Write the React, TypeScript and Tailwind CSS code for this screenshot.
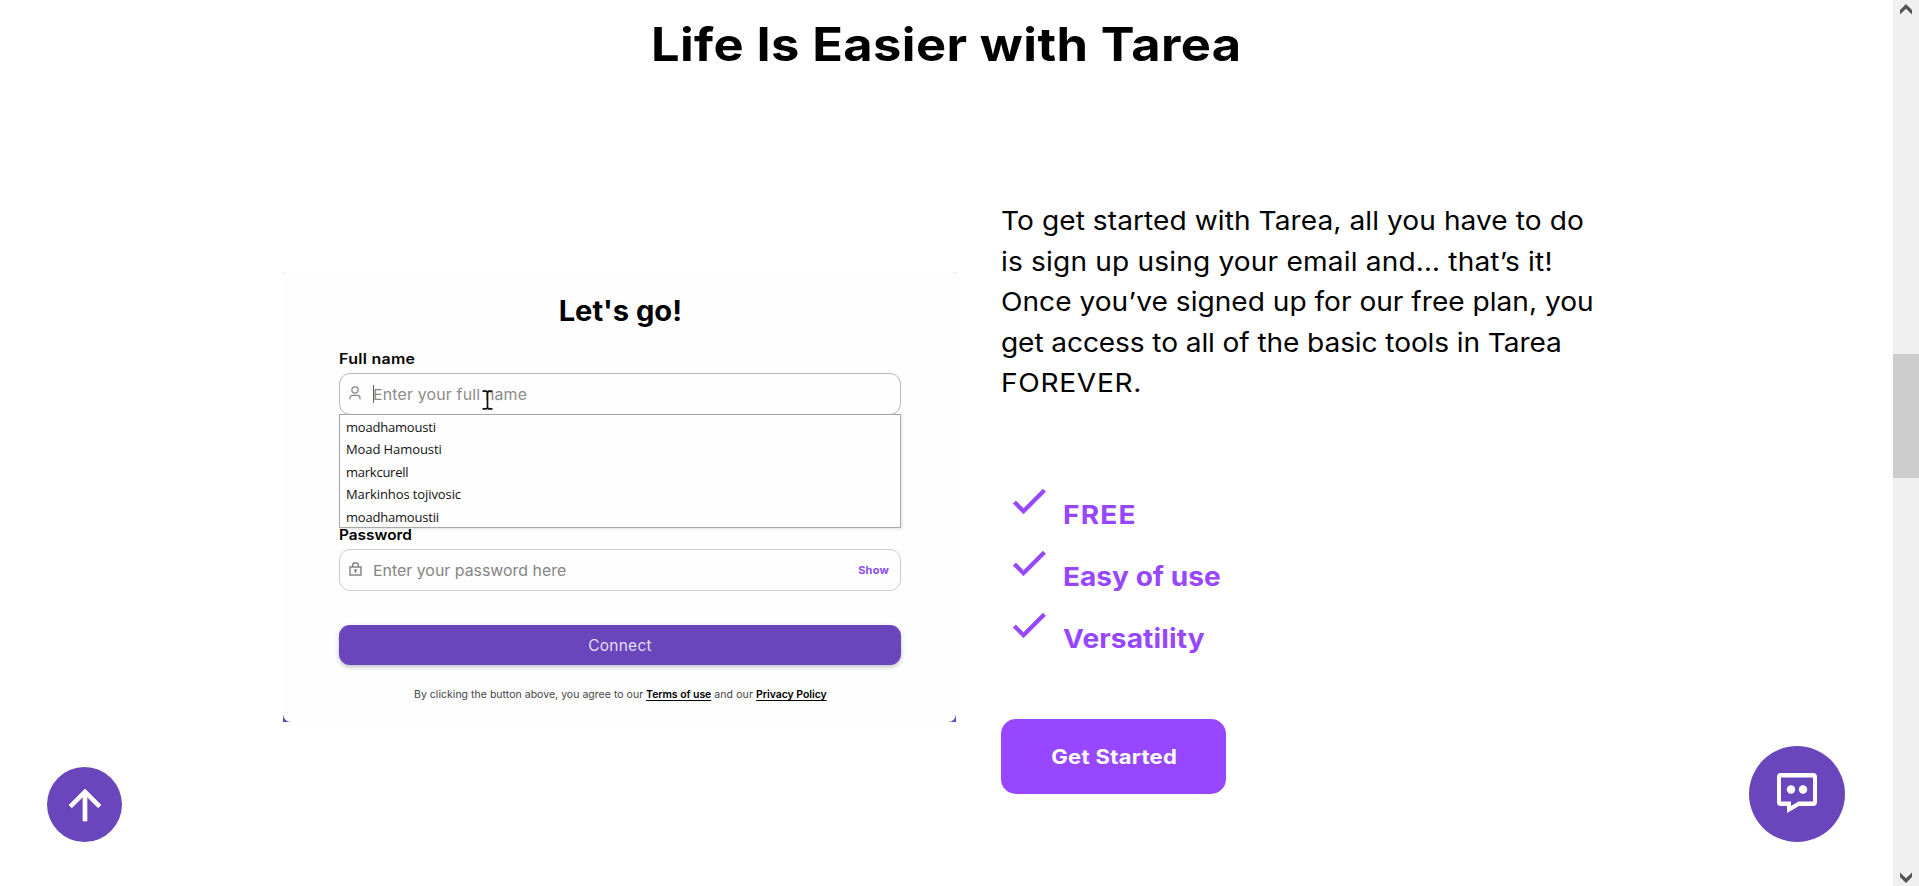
import React from "react";

const paragraph = [
  { text: "To get started with Tarea, all you have to do", tracking: "tracking-[0.07px]" },
  { text: "is sign up using your email and… that’s it!", tracking: "tracking-[0.16px]" },
  { text: "Once you’ve signed up for our free plan, you", tracking: "tracking-[0.01px]" },
  { text: "get access to all of the basic tools in Tarea", tracking: "tracking-[-0.09px]" },
  { text: "FOREVER.", tracking: "tracking-[0.65px]" },
];

const benefits = [
  { text: "FREE", tracking: "tracking-[1.1px]" },
  { text: "Easy of use", tracking: "tracking-normal" },
  { text: "Versatility", tracking: "tracking-[0.12px]" },
];

const suggestions = [
  { text: "moadhamousti", tracking: "tracking-[-0.2px]" },
  { text: "Moad Hamousti", tracking: "tracking-[-0.09px]" },
  { text: "markcurell", tracking: "tracking-[-0.25px]" },
  { text: "Markinhos tojivosic", tracking: "tracking-[-0.09px]" },
  { text: "moadhamoustii", tracking: "tracking-[-0.2px]" },
];

function UserIcon() {
  return (
    <svg className="h-[14px] w-[12px] shrink-0" viewBox="0 0 12 14" fill="none" stroke="#858585" strokeWidth="1.2">
      <circle cx="6" cy="4" r="3.2" />
      <path d="M1 13.5V12a2.7 2.7 0 0 1 2.700-2.700h4.600A2.700 2.700 0 0 1 11 12v1.500" />
    </svg>
  );
}

function LockIcon() {
  return (
    <svg className="h-[14px] w-[13px] shrink-0" viewBox="0 0 13 14" fill="none" stroke="#7d7d7d" strokeWidth="1.4">
      <rect x="1" y="5" width="11" height="8" />
      <path d="M3.600 5V3.600a2.900 2.900 0 0 1 5.800 0V5" />
      <circle cx="6.5" cy="8.3" r="1.2" fill="#7d7d7d" stroke="none" />
      <path d="M6.500 8.300v2.600" />
    </svg>
  );
}

function SignUpCard() {
  return (
    <div className="mt-[71px] h-[450px] w-[673px] shrink-0 bg-linear-to-b from-[#efefef] from-50% to-[#6a46bd] to-50%">
      <div className="flex h-full flex-col rounded-t-[5px] rounded-b-[8px] bg-[#fefefe] pt-[22px] pr-[55px] pl-[56px]">
        <h2 className="pl-px text-center text-[28px] leading-[34px] font-bold">
          <span className="inline-block scale-x-104">Let's go!</span>
        </h2>

        <label className="mt-[21px] origin-left scale-x-110 text-[14.5px] leading-[20px] font-semibold tracking-[0.26px]">Full name</label>
        <div className="relative mt-1">
          <div className="flex h-[42px] items-center rounded-[11px] border border-[#b9b9b9] pl-[9px]">
            <span className="-mt-[3px]">
              <UserIcon />
            </span>
            <span className="ml-[12px] h-[18px] w-px bg-[#666]" />
            <span className="-ml-px origin-left translate-y-[0.5px] scale-x-106 text-[15px] leading-[20px] tracking-[0.16px] text-[#8b8b8b]">
              Enter your full name
            </span>
          </div>
          <svg className="absolute top-[17px] left-[143px] h-[20px] w-[11px]" viewBox="0 0 11 20" fill="none" stroke="#111" strokeWidth="1.7">
            <path d="M0.500 1.200H4.200L5.500 2L6.800 1.200H10.500M5.500 2V18M0.500 18.800H4.200L5.500 18L6.800 18.800H10.500" />
          </svg>
          <ul className="absolute top-[41px] left-0 h-[114px] w-full border border-[#a9a9a9] bg-[#fefefe] pt-[0.5px] pl-[6px] font-['Open_Sans',sans-serif] text-[13px] leading-[22.5px] text-[#111] shadow-[1px_1px_3px_rgba(0,0,0,0.12)]">
            {suggestions.map((s) => (
              <li key={s.text} className={s.tracking}>
                {s.text}
              </li>
            ))}
          </ul>
        </div>

        <label className="mt-[110px] origin-left scale-x-106 text-[14.5px] leading-[20px] font-semibold">Password</label>
        <div className="mt-1 flex h-[42px] shrink-0 items-center rounded-[11px] border border-[#cdcdcd] pr-[11px] pl-[9px]">
          <span className="-mt-[3px]">
            <LockIcon />
          </span>
          <span className="ml-[11px] origin-left translate-y-[0.5px] scale-x-106 text-[15px] leading-[20px] text-[#858585]">
            Enter your password here
          </span>
          <span className="ml-auto text-[11px] leading-[16px] font-bold tracking-[0.2px] text-[#8a4cf0]">Show</span>
        </div>

        <button className="mt-[34px] h-[40px] shrink-0 rounded-[11px] bg-[#6a46bd] pt-px text-[15.5px] font-normal tracking-[0.25px] text-[#e4def3] shadow-[0_2px_4px_rgba(0,0,0,0.25)]">
          Connect
        </button>

        <p className="mt-[22px] pl-[75px] text-[10.5px] leading-[16px] whitespace-nowrap text-[#444]">
          <span className="tracking-[0.03px]">By clicking the button above, you agree to our </span>
          <span className="font-semibold tracking-[-0.07px] text-black underline underline-offset-2">Terms of use</span>
          <span className="tracking-[0.1px]"> and our </span>
          <span className="font-semibold tracking-[-0.05px] text-black underline underline-offset-2">Privacy Policy</span>
        </p>
      </div>
    </div>
  );
}

function Scrollbar() {
  return (
    <div className="flex w-[26px] shrink-0 flex-col items-center bg-[#f0f0f0]">
      <svg className="mt-[4px] h-[11px] w-[12px] shrink-0" viewBox="0 0 12 11" fill="#555">
        <path d="M6 0L12 6V10.500L6 4.800L0 10.500V6Z" />
      </svg>
      <div className="mt-[339px] h-[124px] w-full shrink-0 bg-[#cdcdcd]" />
      <svg className="mt-auto mb-[3px] h-[11px] w-[12px] shrink-0" viewBox="0 0 12 11" fill="#555">
        <path d="M6 11L12 5V0.500L6 6.200L0 0.500V5Z" />
      </svg>
    </div>
  );
}

export default function App() {
  return (
    <div className="relative flex h-[886px] w-[1919px] overflow-hidden bg-white font-['Inter',sans-serif] text-black">
      <main className="flex flex-1 flex-col pt-[20px]">
        <h1 className="ml-[651px] w-max origin-left scale-x-110 text-[46px] leading-[48px] font-bold tracking-[0.36px] whitespace-nowrap">
          Life Is Easier with Tarea
        </h1>

        <section className="mt-[133px] flex gap-[45px] pl-[283px]">
          <SignUpCard />
          <div className="flex flex-col items-start">
            <p className="origin-left scale-x-108 text-[26px] leading-[40.5px] whitespace-nowrap">
              {paragraph.map((line) => (
                <span key={line.text} className={`block ${line.tracking}`}>
                  {line.text}
                </span>
              ))}
            </p>

            <ul className="mt-[75.5px] ml-[6px] text-[#9747ff]">
              {benefits.map((b) => (
                <li key={b.text} className="flex h-[62px] items-start">
                  <svg
                    className="h-[44px] w-[44px] shrink-0"
                    viewBox="0 0 24 24"
                    fill="currentColor"
                    stroke="currentColor"
                    strokeWidth="0.45"
                  >
                    <path d="M9 16.170L4.830 12l-1.420 1.410L9 19 21 7l-1.410-1.410z" />
                  </svg>
                  <span
                    className={`mt-[16px] ml-[11.5px] origin-left scale-x-108 text-[26px] leading-[40px] font-bold whitespace-nowrap ${b.tracking}`}
                  >
                    {b.text}
                  </span>
                </li>
              ))}
            </ul>

            <button className="mt-[54px] flex h-[75px] w-[225px] items-center justify-center rounded-[15px] bg-[#9747ff] pl-px text-white">
              <span className="scale-x-110 text-[20px] font-bold tracking-[0.29px]">Get Started</span>
            </button>
          </div>
        </section>
      </main>

      <Scrollbar />

      <button className="absolute top-[767px] left-[47px] flex h-[75px] w-[75px] items-center justify-center rounded-full bg-[#6a46bd]">
        <svg className="h-[48px] w-[48px]" viewBox="0 0 24 24" fill="white" stroke="white" strokeWidth="0.35">
          <path d="M4 12l1.410 1.410L11 7.830V20h2V7.830l5.580 5.590L20 12l-8-8-8 8z" />
        </svg>
      </button>

      <button className="absolute top-[746px] left-[1749px] flex h-[96px] w-[96px] items-start justify-center rounded-full bg-[#6a46bd] pt-[27px]">
        <svg className="h-[40px] w-[40px]" viewBox="0 0 40 40" fill="white">
          <path
            fillRule="evenodd"
            d="M4 0H36A4 4 0 0 1 40 4V29A4 4 0 0 1 36 33H22L10 40V33H4A4 4 0 0 1 0 29V4A4 4 0 0 1 4 0ZM4 4.500V28.500H14V33L21.500 28.500H36V4.500Z"
          />
          <circle cx="14" cy="16.500" r="4.200" />
          <circle cx="26" cy="16.500" r="4.200" />
        </svg>
      </button>
    </div>
  );
}
